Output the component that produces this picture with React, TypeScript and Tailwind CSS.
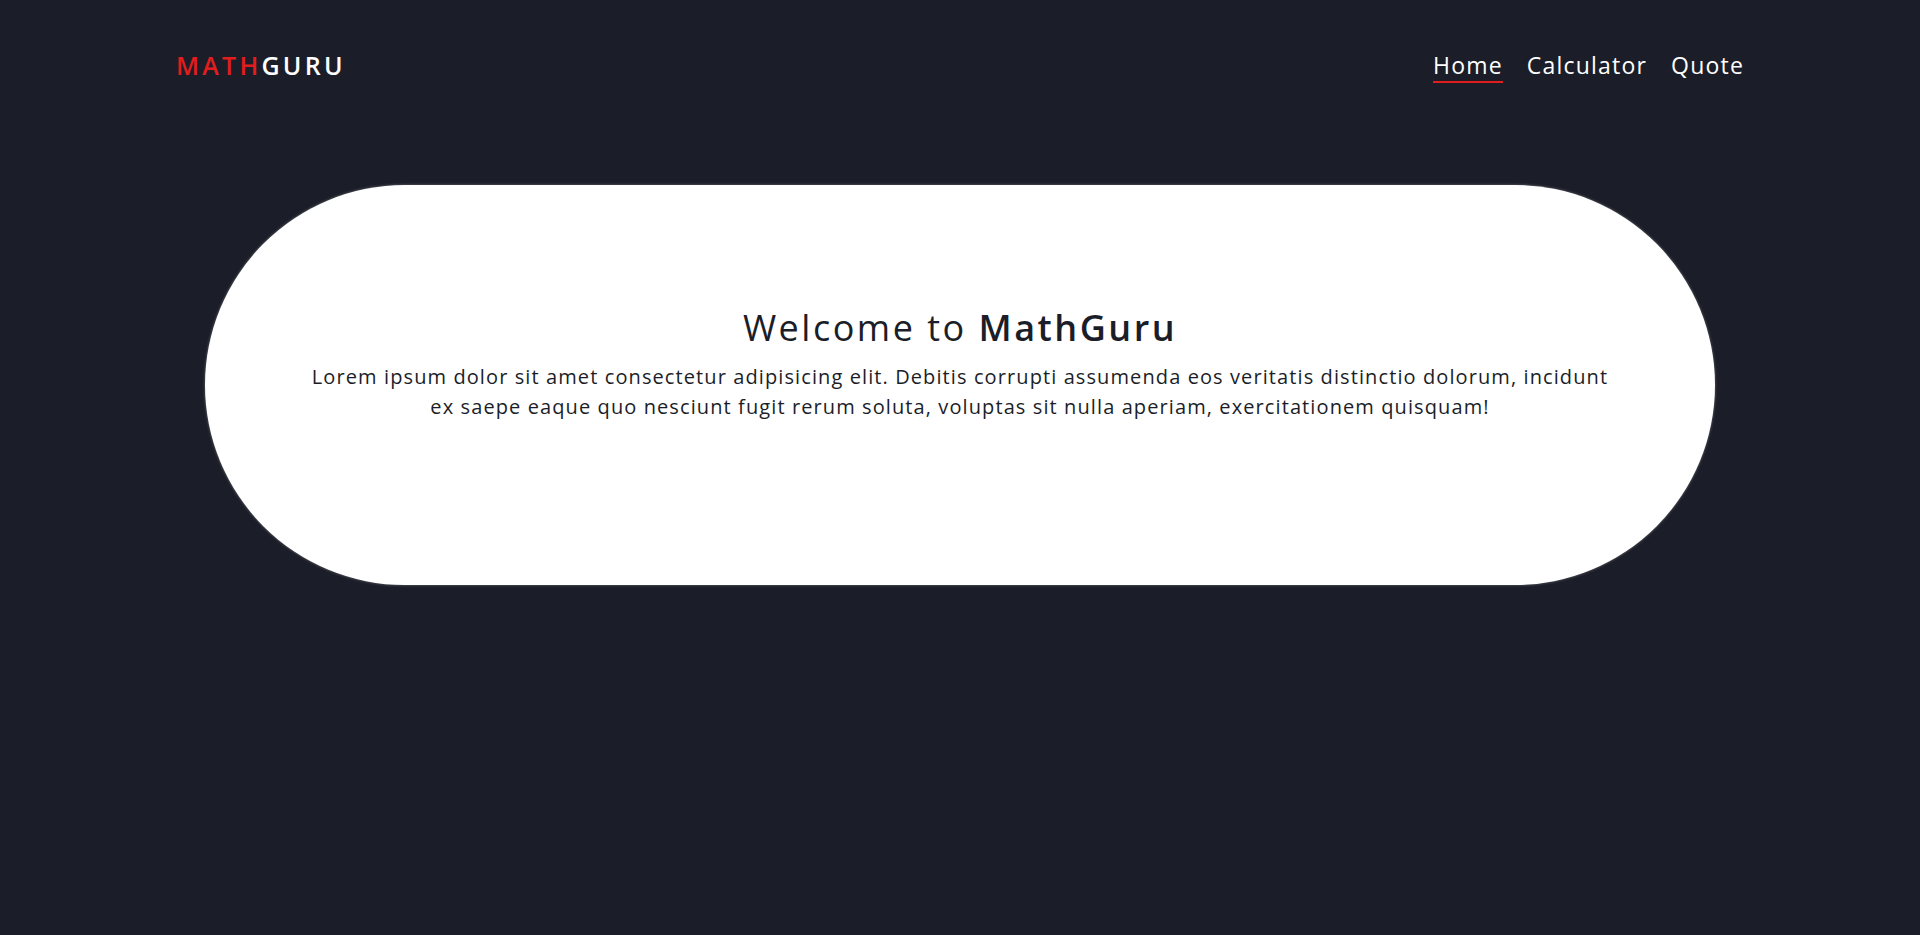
export default function App() {
  const navItems = ["Home", "Calculator", "Quote"];

  return (
    <div className="min-h-screen w-full bg-[#1b1e28] font-['Open_Sans',sans-serif] text-white">
      <header className="flex h-[132px] items-center justify-between px-[176px]">
        <a href="#" className="text-[25px] font-semibold tracking-[0.13em]">
          <span className="text-[#e11d1d]">MATH</span>
          <span className="text-white">GURU</span>
        </a>
        <nav className="flex items-center gap-[24px] text-[23px] tracking-[1.2px]">
          {navItems.map((item, i) => (
            <a
              key={item}
              href="#"
              className={
                i === 0
                  ? "border-b-2 border-[#e11d1d] pb-[1px] leading-[30px]"
                  : "border-b-2 border-transparent pb-[1px] leading-[30px]"
              }
            >
              {item}
            </a>
          ))}
        </nav>
      </header>

      <main className="px-[205px] pt-[53px]">
        <section className="flex h-[400px] flex-col items-center rounded-[200px] bg-white px-[80px] pt-[121px] text-center text-[#1b1e28] shadow-[0_0_3px_rgba(255,255,255,0.35)]">
          <h1 className="text-[36px] leading-[44px] tracking-[2.5px]">
            Welcome to <span className="font-semibold">MathGuru</span>
          </h1>
          <p className="mt-[12px] max-w-[1318px] text-[20px] leading-[30px] tracking-[1.1px]">
            Lorem ipsum dolor sit amet consectetur adipisicing elit. Debitis corrupti assumenda eos veritatis distinctio dolorum, incidunt ex saepe eaque quo nesciunt fugit rerum soluta, voluptas sit nulla aperiam, exercitationem quisquam!
          </p>
        </section>
      </main>
    </div>
  );
}
